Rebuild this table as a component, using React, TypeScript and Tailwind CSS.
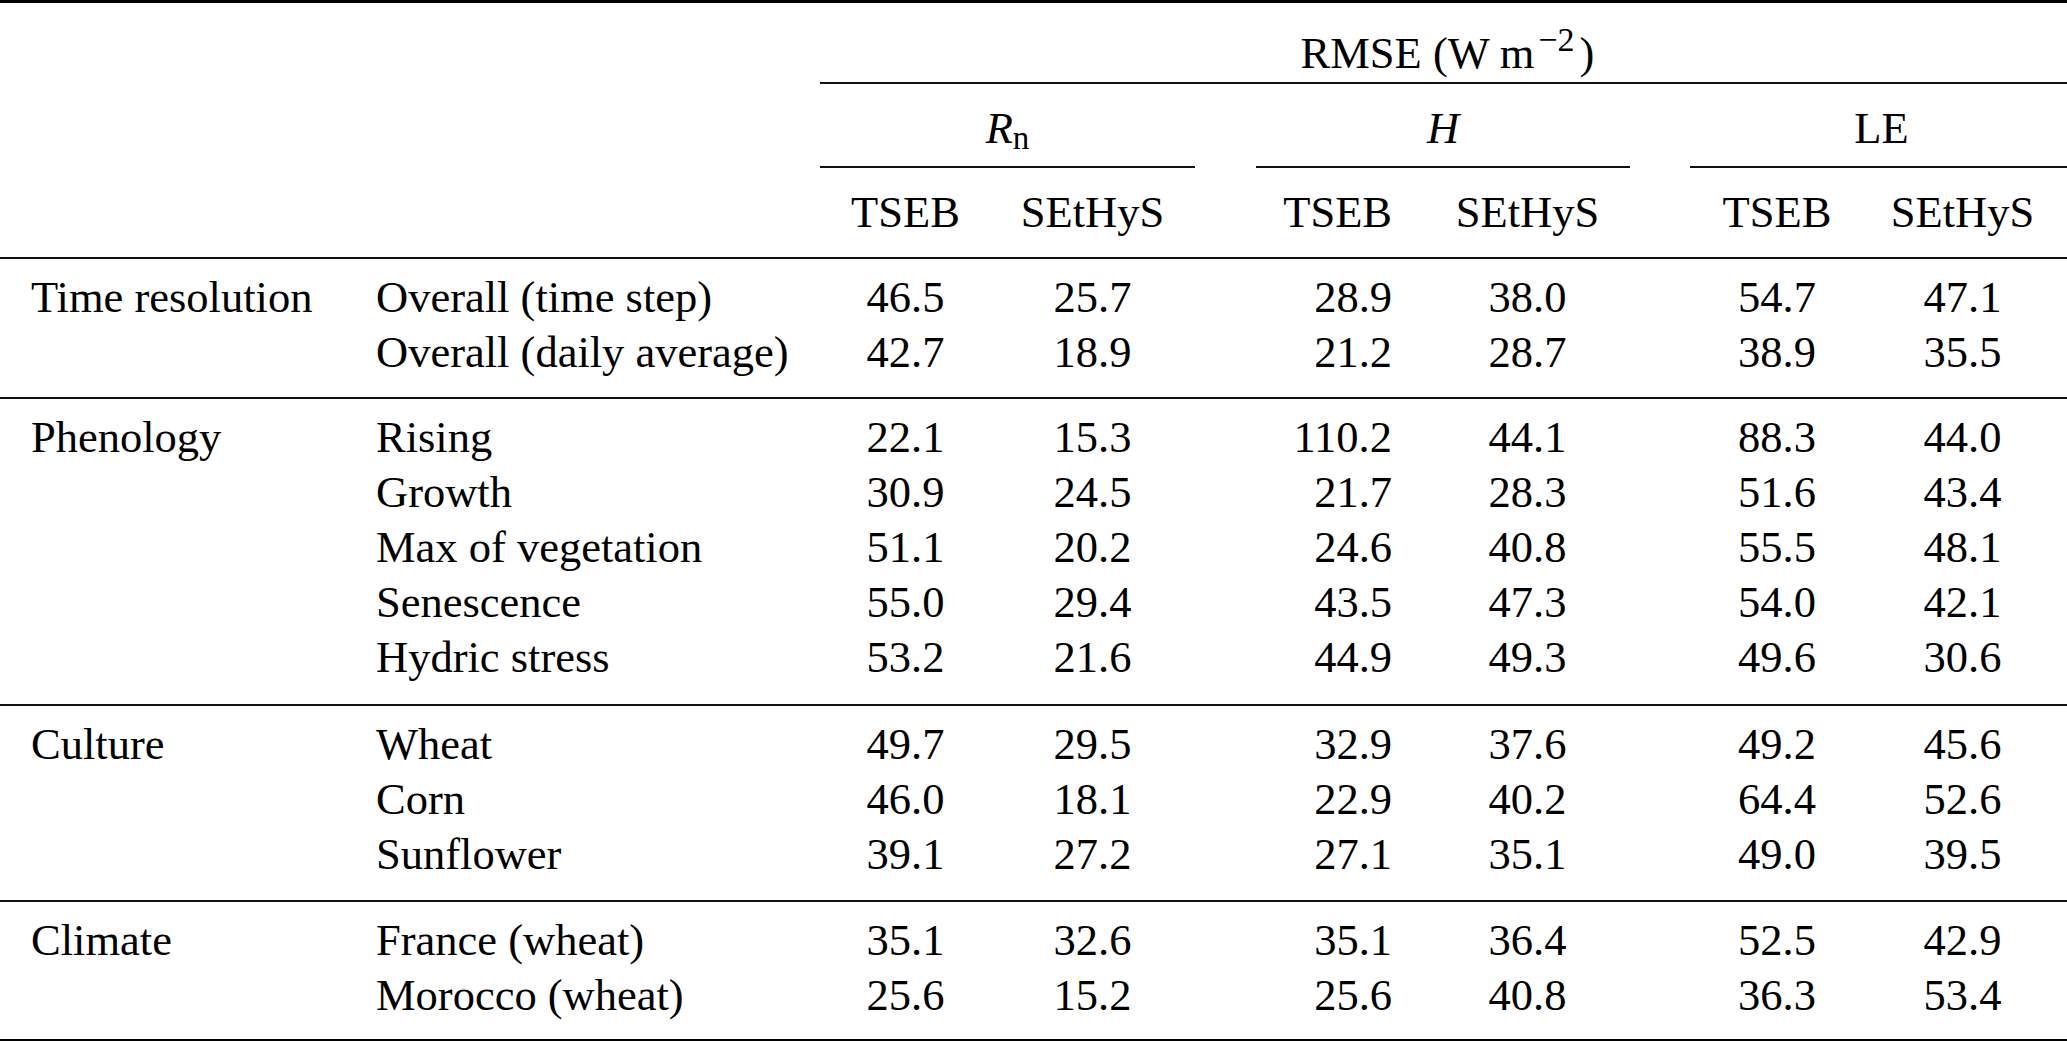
import React from "react";

type Row = [string, string, string, string, string, string, string];

const groups: { cat: string; rows: Row[]; pb: string }[] = [
  {
    cat: "Time resolution",
    pb: "pb-[17px]",
    rows: [
      ["Overall (time step)", "46.5", "25.7", "28.9", "38.0", "54.7", "47.1"],
      ["Overall (daily average)", "42.7", "18.9", "21.2", "28.7", "38.9", "35.5"],
    ],
  },
  {
    cat: "Phenology",
    pb: "pb-[19px]",
    rows: [
      ["Rising", "22.1", "15.3", "110.2", "44.1", "88.3", "44.0"],
      ["Growth", "30.9", "24.5", "21.7", "28.3", "51.6", "43.4"],
      ["Max of vegetation", "51.1", "20.2", "24.6", "40.8", "55.5", "48.1"],
      ["Senescence", "55.0", "29.4", "43.5", "47.3", "54.0", "42.1"],
      ["Hydric stress", "53.2", "21.6", "44.9", "49.3", "49.6", "30.6"],
    ],
  },
  {
    cat: "Culture",
    pb: "pb-[18px]",
    rows: [
      ["Wheat", "49.7", "29.5", "32.9", "37.6", "49.2", "45.6"],
      ["Corn", "46.0", "18.1", "22.9", "40.2", "64.4", "52.6"],
      ["Sunflower", "39.1", "27.2", "27.1", "35.1", "49.0", "39.5"],
    ],
  },
  {
    cat: "Climate",
    pb: "pb-[16px]",
    rows: [
      ["France (wheat)", "35.1", "32.6", "35.1", "36.4", "52.5", "42.9"],
      ["Morocco (wheat)", "25.6", "15.2", "25.6", "40.8", "36.3", "53.4"],
    ],
  },
];

function Cells({ c1, c2, v }: { c1: React.ReactNode; c2: React.ReactNode; v: React.ReactNode[] }) {
  return (
    <div className="flex h-[55px] leading-[55px] whitespace-nowrap">
      <div className="w-[376px] pl-[31px]">{c1}</div>
      <div className="w-[444px]">{c2}</div>
      <div className="w-[171px] flex justify-center">{v[0]}</div>
      <div className="w-[203px] flex justify-center">{v[1]}</div>
      <div className="w-[208px] flex justify-end pr-[10px]">{v[2]}</div>
      <div className="w-[251px] flex justify-center">{v[3]}</div>
      <div className="w-[248px] flex justify-center">{v[4]}</div>
      <div className="w-[166px] flex justify-center pr-[43px]">{v[5]}</div>
    </div>
  );
}

export default function App() {
  return (
    <div className="w-[2067px] bg-white text-black font-['Liberation_Serif','Times_New_Roman',serif] text-[44.5px] leading-[55px]">
      {/* top rule */}
      <div className="h-[3px] bg-black" />

      {/* RMSE header */}
      <div className="flex pt-[20px] pb-[4px]">
        <div className="w-[820px]" />
        <div className="w-[1247px] flex justify-center h-[55px] whitespace-nowrap pl-[8px]">
          <span>
            RMSE (W<span className="inline-block w-[10px]" />m
            <span className="text-[34px] leading-none align-[17px]">
              <span className="ml-[4px]">−</span>2
            </span>
            <span className="ml-[5px]">)</span>
          </span>
        </div>
      </div>
      <div className="flex">
        <div className="w-[820px]" />
        <div className="w-[1247px] h-[2px] bg-[#111]" />
      </div>

      {/* Rn / H / LE header */}
      <div className="flex pt-[17px] pb-[10px] whitespace-nowrap">
        <div className="w-[820px]" />
        <div className="w-[375px] flex justify-center h-[55px]">
          <span>
            <i>R</i>
            <span className="text-[33px] leading-none align-[-6px]">n</span>
          </span>
        </div>
        <div className="w-[61px]" />
        <div className="w-[374px] flex justify-center h-[55px]">
          <i>H</i>
        </div>
        <div className="w-[60px]" />
        <div className="w-[377px] flex justify-center h-[55px] pl-[6px]">LE</div>
      </div>
      <div className="flex">
        <div className="w-[820px]" />
        <div className="w-[375px] h-[2px] bg-[#111]" />
        <div className="w-[61px]" />
        <div className="w-[374px] h-[2px] bg-[#111]" />
        <div className="w-[60px]" />
        <div className="w-[377px] h-[2px] bg-[#111]" />
      </div>

      {/* TSEB / SEtHyS header */}
      <div className="pt-[17px] pb-[17px]">
        <Cells c1="" c2="" v={["TSEB", "SEtHyS", "TSEB", "SEtHyS", "TSEB", "SEtHyS"]} />
      </div>
      <div className="h-[2px] bg-[#111]" />

      {/* body */}
      {groups.map((g, gi) => (
        <React.Fragment key={g.cat}>
          <div className={`pt-[11px] ${g.pb}`}>
            {g.rows.map((r, ri) => (
              <Cells key={ri} c1={ri === 0 ? g.cat : ""} c2={r[0]} v={r.slice(1)} />
            ))}
          </div>
          {gi < groups.length - 1 ? (
            <div className="h-[2px] bg-[#111]" />
          ) : (
            <div className="h-[3px] bg-black" />
          )}
        </React.Fragment>
      ))}
    </div>
  );
}
